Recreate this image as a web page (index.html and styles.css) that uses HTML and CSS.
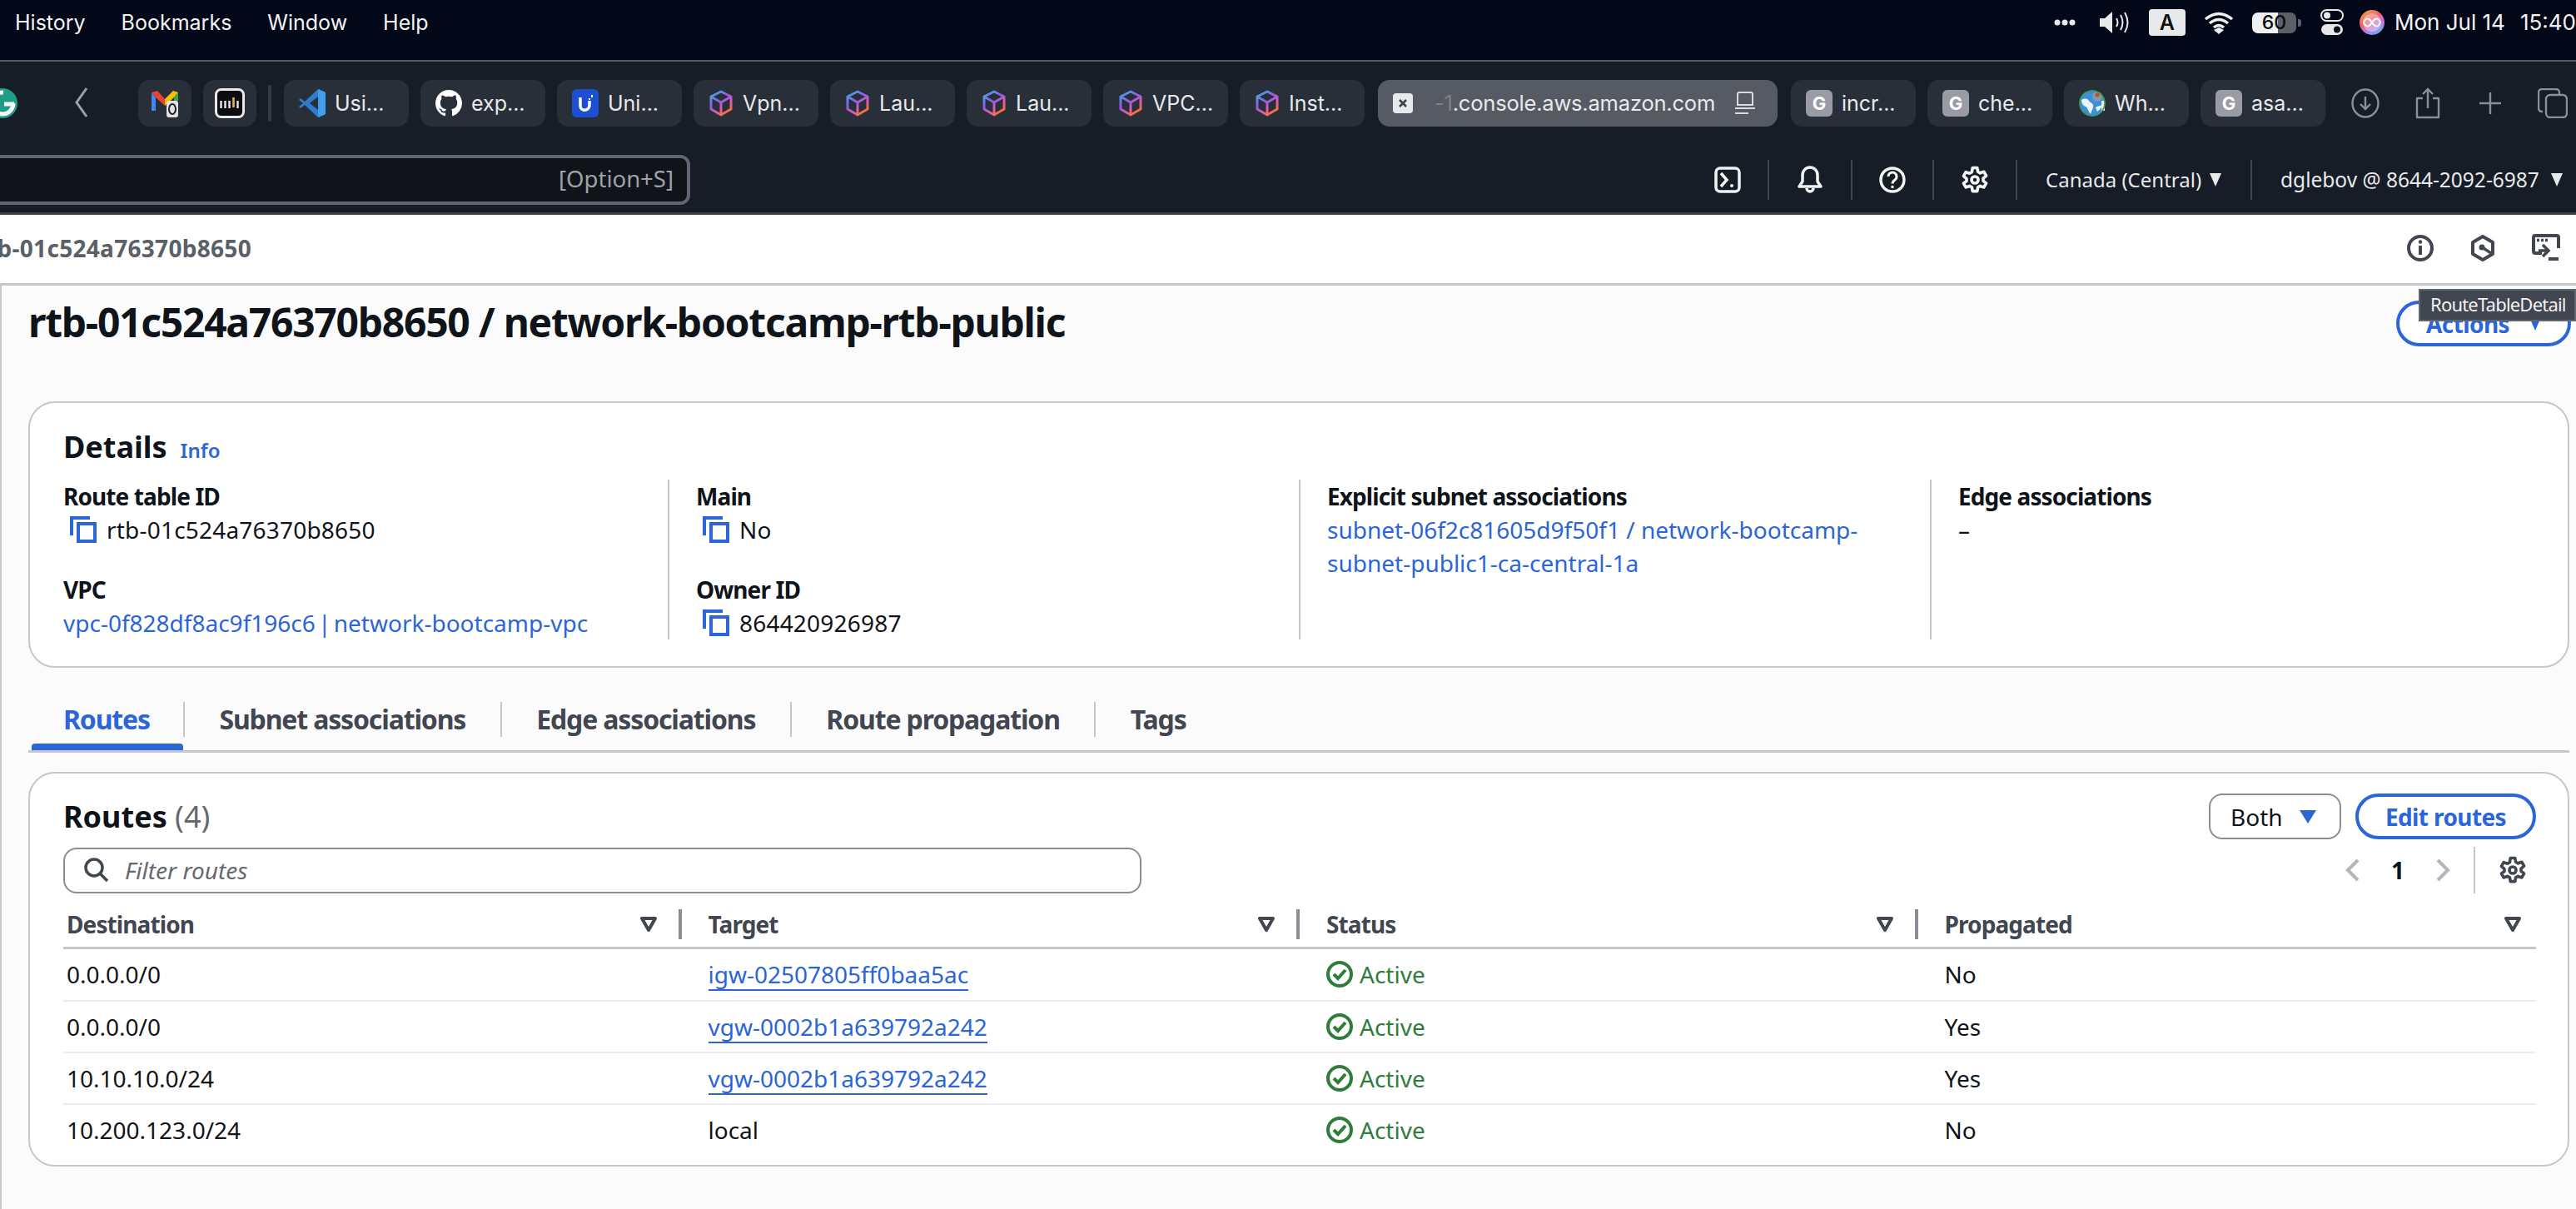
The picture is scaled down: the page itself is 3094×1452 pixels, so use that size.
FILE: index.html
```html
<!DOCTYPE html>
<html lang="en">
<head>
<meta charset="utf-8">
<title>Route table details</title>
<link rel="stylesheet" href="styles.css">
</head>
<body>
<svg class="defs" width="0" height="0" aria-hidden="true">
  <defs>
    <linearGradient id="cubeg" x1="0" y1="0" x2="0.6" y2="1">
      <stop offset="0" stop-color="#35b4d8"/><stop offset="0.45" stop-color="#8f5ce6"/><stop offset="0.75" stop-color="#d95bb8"/><stop offset="1" stop-color="#f4703c"/>
    </linearGradient>
    <symbol id="cube" viewBox="0 0 30 32"><path d="M15 2 27 8v15l-12 7L3 23V8z M3 8l12 7 12-7 M15 15v15" fill="none" stroke="url(#cubeg)" stroke-width="3" stroke-linejoin="round"/></symbol>
    <symbol id="gicon" viewBox="0 0 32 32"><rect width="32" height="32" rx="6" fill="#9b9ba6"/><text x="16" y="24" text-anchor="middle" font-family="Inter, sans-serif" font-weight="700" font-size="22" fill="#fff">G</text></symbol>
    <symbol id="copy" viewBox="0 0 32 32"><path d="M2 23V2h22" fill="none" stroke="#2b65d9" stroke-width="4"/><rect x="10" y="9" width="20" height="21" fill="none" stroke="#2b65d9" stroke-width="4"/></symbol>
    <symbol id="gear" viewBox="0 0 16 16"><path d="M6.7 1.2h2.6l.4 2.2 1.3.75 2.1-.75 1.3 2.25-1.7 1.45v1.4l1.7 1.45-1.3 2.25-2.1-.75-1.3.75-.4 2.2H6.7l-.4-2.2-1.3-.75-2.1.75-1.3-2.25L3.3 8.7V7.3L1.6 5.85 2.9 3.6l2.1.75 1.3-.75z" fill="none" stroke="currentColor" stroke-width="1.7" stroke-linejoin="round"/><circle cx="8" cy="8" r="1.9" fill="none" stroke="currentColor" stroke-width="1.7"/></symbol>
    <symbol id="sort" viewBox="0 0 20 18"><path d="M2 2h16l-8 14z" fill="none" stroke="#424650" stroke-width="4" stroke-linejoin="round"/></symbol>
    <symbol id="ok" viewBox="0 0 32 32"><circle cx="16" cy="16" r="14" fill="none" stroke="#2f7d3a" stroke-width="4"/><path d="M9 16l5 5 9-10" fill="none" stroke="#2f7d3a" stroke-width="4"/></symbol>
  </defs>
</svg>

<header class="menubar">
  <nav class="menu">
    <span>History</span><span>Bookmarks</span><span>Window</span><span>Help</span>
  </nav>
  <div class="status">
    <svg class="st-dots" width="26" height="8" viewBox="0 0 26 8"><circle cx="4" cy="4" r="3.500" fill="#e8e8ea"/><circle cx="13" cy="4" r="3.500" fill="#e8e8ea"/><circle cx="22" cy="4" r="3.500" fill="#e8e8ea"/></svg>
    <svg class="st-sound" width="40" height="28" viewBox="0 0 40 28"><path d="M1 9h6l9-8v26l-9-8H1z" fill="#e8e8ea"/><path d="M21 9q3 5 0 10M26 5q5 9 0 18M31 2q7 12 0 24" fill="none" stroke="#e8e8ea" stroke-width="2"/></svg>
    <span class="st-a">A</span>
    <svg class="st-wifi" width="36" height="28" viewBox="0 0 36 28"><path d="M2 10q16-13 32 0M7 15q11-9 22 0M12 20q6-5 12 0" fill="none" stroke="#f0f0f2" stroke-width="3.400"/><path d="M12 23l6-3 6 3-6 5z" fill="#f0f0f2"/></svg>
    <span class="st-batt">60</span>
    <svg class="st-ctl" width="28" height="32" viewBox="0 0 28 32"><rect x="1" y="1" width="26" height="13" rx="6.500" fill="none" stroke="#e8e8ea" stroke-width="2"/><circle cx="8" cy="7.500" r="4" fill="#e8e8ea"/><rect x="1" y="18" width="26" height="13" rx="6.500" fill="#e8e8ea"/><circle cx="20" cy="24.500" r="4" fill="#0a0f1c"/></svg>
    <svg class="st-siri" width="30" height="30" viewBox="0 0 30 30"><defs><linearGradient id="siri" x1="0.2" y1="0" x2="0.8" y2="1"><stop offset="0" stop-color="#f4a13b"/><stop offset="0.4" stop-color="#ee5f76"/><stop offset="0.7" stop-color="#b77bea"/><stop offset="1" stop-color="#43c4ea"/></linearGradient></defs><circle cx="15" cy="15" r="15" fill="url(#siri)"/><circle cx="15" cy="15" r="11" fill="#fff" fill-opacity="0.35"/><path d="M5 15c3-7 7-5 10 0s7 7 10 0c-3-7-7-5-10 0s-7 7-10 0z" fill="none" stroke="#fff" stroke-width="1.800"/></svg>
    <span class="st-date">Mon Jul 14</span>
    <span class="st-time">15:40</span>
  </div>
</header>

<section class="chrome">
  <div class="tabrow">
    <svg class="g-logo" width="21" height="36" viewBox="15 0 21 36"><circle cx="18" cy="18" r="18" fill="#1f9d86"/><circle cx="18" cy="18" r="13" fill="none" stroke="#f2f6f5" stroke-width="5" stroke-dasharray="62 20"/><path d="M20 19h12" stroke="#f2f6f5" stroke-width="5"/></svg>
    <svg class="back" width="18" height="38" viewBox="0 0 18 38"><path d="M15 2 3 19l12 17" fill="none" stroke="#9aa0a8" stroke-width="3"/></svg>
    <div class="pin first">
      <svg width="32" height="34" viewBox="0 0 32 34"><path d="M0 4v22h5V10z" fill="#4285f4"/><path d="M0 4 7 2l9 10 0 8-11-10z" fill="#ea4335"/><path d="M32 4v10l-5 2V10z" fill="#34a853"/><path d="M32 4l-6-2-10 10v8l11-10z" fill="#fbbc04"/><rect x="18" y="14" width="14" height="20" rx="3" fill="#dfe1e5"/><ellipse cx="25" cy="24" rx="4" ry="6" fill="none" stroke="#222" stroke-width="2"/></svg>
    </div>
    <div class="pin">
      <svg width="36" height="36" viewBox="0 0 36 36"><rect x="1.500" y="1.500" width="33" height="33" rx="6" fill="#0c0c0e" stroke="#e8e8ea" stroke-width="3"/><path d="M7.500 15v9M12.500 15v9M17.500 15v9M27.500 15v9" stroke="#e8e8ea" stroke-width="2.400"/><path d="M22.500 11v12" stroke="#e8b44a" stroke-width="2.600"/></svg>
    </div>
    <span class="tabsep"></span>
    <div class="tab"><svg width="32" height="34" viewBox="0 0 32 34"><path fill-rule="evenodd" d="M23 0 7 15 2 11 0 13l5 4-5 4 2 2 5-4 16 15 9-4V4zM23 9 13 17l10 8z" fill="#2f7cc8"/><path d="M23 0l9 4v26l-9 4z" fill="#3f9fee"/></svg><span>Usi...</span></div>
    <div class="tab"><svg width="32" height="34" viewBox="0 0 16 16" preserveAspectRatio="xMidYMid meet"><path fill="#fff" d="M8 0C3.580 0 0 3.580 0 8c0 3.540 2.290 6.530 5.470 7.590.4.070.55-.17.55-.38 0-.19-.01-.82-.01-1.490-2.010.37-2.530-.49-2.690-.94-.09-.23-.48-.94-.82-1.130-.28-.15-.68-.52-.01-.53.63-.01 1.080.58 1.230.82.720 1.210 1.870.870 2.330.660.070-.52.280-.870.510-1.070-1.780-.2-3.640-.89-3.640-3.950 0-.87.310-1.590.820-2.150-.08-.2-.36-1.020.080-2.120 0 0 .670-.210 2.200.820.640-.180 1.320-.270 2-.270s1.360.090 2 .270c1.530-1.040 2.200-.820 2.200-.820.440 1.100.160 1.920.080 2.120.510.560.820 1.270.820 2.150 0 3.070-1.870 3.750-3.650 3.950.290.250.540.730.540 1.480 0 1.070-.010 1.930-.010 2.200 0 .210.150.460.550.380A8.010 8.010 0 0 0 16 8c0-4.420-3.580-8-8-8z"/></svg><span>exp...</span></div>
    <div class="tab"><svg width="32" height="34" viewBox="0 0 32 34"><rect width="32" height="34" rx="6" fill="#1c4fd1"/><path d="M10 10v10c0 7 10 7 11 0v-6" fill="none" stroke="#fff" stroke-width="3.500"/><path d="M24 7v3M21 11v2" stroke="#fff" stroke-width="2"/></svg><span>Uni...</span></div>
    <div class="tab"><svg class="cube" width="30" height="32"><use href="#cube"/></svg><span>Vpn...</span></div>
    <div class="tab"><svg class="cube" width="30" height="32"><use href="#cube"/></svg><span>Lau...</span></div>
    <div class="tab"><svg class="cube" width="30" height="32"><use href="#cube"/></svg><span>Lau...</span></div>
    <div class="tab"><svg class="cube" width="30" height="32"><use href="#cube"/></svg><span>VPC...</span></div>
    <div class="tab"><svg class="cube" width="30" height="32"><use href="#cube"/></svg><span>Inst...</span></div>
    <div class="tab current">
      <svg width="24" height="24" viewBox="0 0 24 24"><rect width="24" height="24" rx="4" fill="#e8e9eb"/><path d="M8 8l8 8M16 8l-8 8" stroke="#3c4048" stroke-width="2.600"/></svg>
      <span class="url"><span class="fade">-1</span>.console.aws.amazon.com</span>
      <svg width="24" height="28" viewBox="0 0 24 28"><path d="M3 16V3a2 2 0 0 1 2-2h14a2 2 0 0 1 2 2v13z" fill="none" stroke="#d9dbde" stroke-width="2"/><path d="M0 20h24M0 26h16" stroke="#d9dbde" stroke-width="2"/></svg>
    </div>
    <div class="tab"><svg width="32" height="32"><use href="#gicon"/></svg><span>incr...</span></div>
    <div class="tab"><svg width="32" height="32"><use href="#gicon"/></svg><span>che...</span></div>
    <div class="tab"><svg width="32" height="34" viewBox="0 0 32 34"><circle cx="16" cy="17" r="15.500" fill="#3b8fdc"/><path d="M3 13c4-2 7-2 9 1s4 2 5 5-2 7-3 11c-3-3-3-7-6-9-3-1-5-4-5-8z" fill="#eef3f6"/><path d="M20 22c3-2 6-2 8-3-1 3-3 6-6 8z" fill="#eef3f6"/><circle cx="22" cy="9" r="6" fill="#8a97a5"/><circle cx="22" cy="7" r="2.500" fill="#c5463c"/><rect x="27" y="14" width="4" height="12" fill="#e8e9eb"/><circle cx="16" cy="17" r="15" fill="none" stroke="#3f9b4c" stroke-width="1.500"/></svg><span>Wh...</span></div>
    <div class="tab"><svg width="32" height="32"><use href="#gicon"/></svg><span>asa...</span></div>
    <div class="tools">
      <span><svg width="34" height="36" viewBox="0 0 34 36"><ellipse cx="17" cy="18" rx="15.500" ry="16.500" fill="none" stroke="#8b9098" stroke-width="2.400"/><path d="M17 10v15M11 19l6 6 6-6" fill="none" stroke="#8b9098" stroke-width="2.400"/></svg></span>
      <span><svg width="30" height="38" viewBox="0 0 30 38"><path d="M9 13H2v23h26V13h-7" fill="none" stroke="#8b9098" stroke-width="2.400" stroke-linejoin="round"/><path d="M15 25V2M9 8l6-6 6 6" fill="none" stroke="#8b9098" stroke-width="2.400"/></svg></span>
      <span><svg width="28" height="28" viewBox="0 0 28 28"><path d="M14 1v26M1 14h26" stroke="#8b9098" stroke-width="2.400"/></svg></span>
      <span><svg width="36" height="36" viewBox="0 0 36 36"><rect x="10" y="8" width="25" height="27" rx="5" fill="none" stroke="#8b9098" stroke-width="2.400"/><path d="M6 28H5a4 4 0 0 1-4-4V5a4 4 0 0 1 4-4h17a4 4 0 0 1 4 4v2" fill="none" stroke="#8b9098" stroke-width="2.400"/></svg></span>
    </div>
  </div>
  <div class="consolebar">
    <div class="searchbox"><span>[Option+S]</span></div>
    <div class="navitems">
      <span class="navicon first"><svg width="32" height="32" viewBox="0 0 32 32"><rect x="2" y="2" width="28" height="28" rx="5" fill="none" stroke="#f2f3f3" stroke-width="3.500"/><path d="M8 8l7 8-7 8" fill="none" stroke="#f2f3f3" stroke-width="3.500"/><circle cx="21" cy="23" r="2" fill="#f2f3f3"/></svg></span>
      <span class="navicon"><svg width="32" height="34" viewBox="0 0 32 34"><path d="M3 25h26l-4-6V11a9 9 0 0 0-18 0v8z" fill="none" stroke="#f2f3f3" stroke-width="3.500" stroke-linejoin="round"/><path d="M12 27a4 4 0 0 0 8 0" fill="none" stroke="#f2f3f3" stroke-width="3.500"/></svg></span>
      <span class="navicon first"><svg width="32" height="32" viewBox="0 0 32 32"><circle cx="16" cy="16" r="14" fill="none" stroke="#f2f3f3" stroke-width="3.500"/><path d="M11 12a5 5 0 1 1 8 4c-2 1.500-3 2.500-3 4.500" fill="none" stroke="#f2f3f3" stroke-width="3"/><circle cx="16" cy="24.500" r="1.800" fill="#f2f3f3"/></svg></span>
      <span class="navicon gearic"><svg width="34" height="34"><use href="#gear"/></svg></span>
      <span class="navlabel region">Canada (Central) <i class="caret"></i></span>
      <span class="navlabel account">dglebov @ 8644-2092-6987 <i class="caret"></i></span>
    </div>
  </div>
</section>

<section class="crumbbar">
  <div class="crumb"><span>rtb-01c524a76370b8650</span></div>
  <div class="crumbicons">
    <svg width="32" height="32" viewBox="0 0 32 32"><circle cx="16" cy="16" r="14" fill="none" stroke="#424650" stroke-width="4"/><path d="M16 13v11" stroke="#424650" stroke-width="4"/><circle cx="16" cy="8.500" r="2.200" fill="#424650"/></svg>
    <svg width="30" height="32" viewBox="0 0 30 32"><path d="M15 2 27 9v14l-12 7L3 23V9z" fill="none" stroke="#424650" stroke-width="4" stroke-linejoin="round"/><circle cx="14" cy="15" r="3.500" fill="#424650"/><path d="M14 15l11 7" stroke="#424650" stroke-width="3.500"/></svg>
    <svg width="34" height="34" viewBox="0 0 34 34"><path d="M12 23H4a2 2 0 0 1-2-2V4a2 2 0 0 1 2-2h26a2 2 0 0 1 2 2v13" fill="none" stroke="#424650" stroke-width="4"/><path d="M6 7.500h3M11 7.500h3M16 7.500h3" stroke="#424650" stroke-width="3.500"/><path d="M8 20h11M13 13l7 7-7 7" fill="none" stroke="#424650" stroke-width="3.500"/><rect x="20" y="28" width="12" height="4" fill="#424650"/></svg>
  </div>
</section>

<main class="page">
  <div class="titlerow">
    <h1>rtb-01c524a76370b8650 / network-bootcamp-rtb-public</h1>
    <button class="pillbtn actions">Actions <i class="caret blue"></i></button>
  </div>

  <section class="card details">
    <div class="dhead"><h2>Details</h2><a class="info">Info</a></div>
    <div class="detailgrid">
      <div class="dcol">
        <div class="kv"><b>Route table ID</b><p class="copyval"><svg width="32" height="32"><use href="#copy"/></svg>rtb-01c524a76370b8650</p></div>
        <div class="kv"><b>VPC</b><p><a class="vpc">vpc-0f828df8ac9f196c6 | network-bootcamp-vpc</a></p></div>
      </div>
      <div class="dcol">
        <div class="kv"><b>Main</b><p class="copyval"><svg width="32" height="32"><use href="#copy"/></svg>No</p></div>
        <div class="kv"><b>Owner ID</b><p class="copyval"><svg width="32" height="32"><use href="#copy"/></svg>864420926987</p></div>
      </div>
      <div class="dcol">
        <div class="kv"><b>Explicit subnet associations</b><p><a>subnet-06f2c81605d9f50f1 / network-bootcamp-subnet-public1-ca-central-1a</a></p></div>
      </div>
      <div class="dcol">
        <div class="kv"><b>Edge associations</b><p>–</p></div>
      </div>
    </div>
  </section>

  <nav class="tabs">
    <a class="on">Routes</a><a>Subnet associations</a><a>Edge associations</a><a>Route propagation</a><a>Tags</a>
  </nav>

  <section class="card routes">
    <div class="routeshead">
      <h2>Routes <span>(4)</span></h2>
      <div class="routebtns">
        <button class="selectbtn">Both <i class="caret blue big"></i></button>
        <button class="pillbtn edit">Edit routes</button>
      </div>
    </div>
    <div class="filterrow">
      <div class="filter">
        <svg width="32" height="32" viewBox="0 0 32 32"><circle cx="13" cy="13" r="10" fill="none" stroke="#424650" stroke-width="3.500"/><path d="M20 20l9 9" stroke="#424650" stroke-width="3.500"/></svg>
        <em>Filter routes</em>
      </div>
      <div class="pager">
        <svg width="24" height="28" viewBox="0 0 24 28"><path d="M18 2 6 14l12 12" fill="none" stroke="#b4b4bb" stroke-width="4"/></svg>
        <strong>1</strong>
        <svg width="24" height="28" viewBox="0 0 24 28"><path d="M6 2l12 12L6 26" fill="none" stroke="#b4b4bb" stroke-width="4"/></svg>
        <span class="pagersep"></span>
        <svg class="pgear" width="34" height="34"><use href="#gear"/></svg>
      </div>
    </div>
    <table>
      <thead>
        <tr>
          <th class="c0"><div class="thc"><span>Destination</span><svg width="20" height="18"><use href="#sort"/></svg><i></i></div></th>
          <th><div class="thc"><span>Target</span><svg width="20" height="18"><use href="#sort"/></svg><i></i></div></th>
          <th><div class="thc"><span>Status</span><svg width="20" height="18"><use href="#sort"/></svg><i></i></div></th>
          <th><div class="thc last"><span>Propagated</span><svg width="20" height="18"><use href="#sort"/></svg></div></th>
        </tr>
      </thead>
      <tbody>
        <tr><td class="c0">0.0.0.0/0</td><td><a class="ul">igw-02507805ff0baa5ac</a></td><td><span class="stat"><svg width="32" height="32"><use href="#ok"/></svg>Active</span></td><td>No</td></tr>
        <tr><td class="c0">0.0.0.0/0</td><td><a class="ul">vgw-0002b1a639792a242</a></td><td><span class="stat"><svg width="32" height="32"><use href="#ok"/></svg>Active</span></td><td>Yes</td></tr>
        <tr><td class="c0">10.10.10.0/24</td><td><a class="ul">vgw-0002b1a639792a242</a></td><td><span class="stat"><svg width="32" height="32"><use href="#ok"/></svg>Active</span></td><td>Yes</td></tr>
        <tr><td class="c0">10.200.123.0/24</td><td>local</td><td><span class="stat"><svg width="32" height="32"><use href="#ok"/></svg>Active</span></td><td>No</td></tr>
      </tbody>
    </table>
  </section>
  <div class="tooltip">RouteTableDetail</div>
</main>
</body>
</html>
```

FILE: styles.css
```css
* { box-sizing: border-box; }
html, body { margin: 0; padding: 0; height: 100%; }
body {
  width: 3094px; height: 1452px; overflow: hidden; background: #fbfbfb;
  font-family: "Noto Sans", sans-serif; font-size: 28px; line-height: 40px; color: #0f141a;
  display: flex; flex-direction: column;
}
.defs { position: absolute; }
a { color: #2b65d9; text-decoration: none; }
p, h1, h2 { margin: 0; }

/* macOS menu bar */
.menubar {
  height: 74px; flex: none; background: #030818; border-bottom: 2px solid #55585e;
  display: flex; justify-content: space-between; align-items: flex-start;
  font-family: Inter, sans-serif; font-size: 26px; color: #f2f2f4;
  padding-top: 8px; line-height: 38px;
}
.menu { display: flex; gap: 43px; padding-left: 18px; font-size: 25px; }
.status { display: flex; align-items: center; height: 38px; white-space: nowrap; }
.status svg { flex: none; }
.st-sound { margin-left: 28px; }
.st-a {
  width: 44px; height: 32px; margin-left: 20px; background: #e8e9eb; color: #111; border-radius: 4px;
  font-size: 25px; font-weight: 600; text-align: center; line-height: 32px;
}
.st-wifi { margin-left: 22px; }
.st-batt {
  position: relative; width: 53px; height: 25px; margin: 0 5px 0 22px; border-radius: 7px; color: #0a0a0a;
  background: linear-gradient(90deg, #eef0f2 59%, #5b5f68 59%);
  font-size: 23px; font-weight: 500; line-height: 25px; text-align: center;
}
.st-batt::after { content: ""; position: absolute; left: 55px; top: 8px; width: 4px; height: 9px; background: #5b5f68; border-radius: 0 3px 3px 0; }
.st-ctl { margin-left: 24px; }
.st-siri { margin-left: 19px; }
.st-date { margin-left: 12px; }
.st-time { margin-left: 18px; }

/* browser chrome */
.chrome { height: 184px; flex: none; background: #161d26; border-bottom: 3px solid #3b4048; display: flex; flex-direction: column; }
.tabrow { height: 96px; padding-top: 22px; display: flex; align-items: flex-start; font-family: Inter, sans-serif; font-size: 25px; color: #e8e9eb; white-space: nowrap; }
.g-logo { margin-top: 10px; flex: none; }
.back { margin: 8px 0 0 68px; flex: none; }
.pin { width: 64px; height: 56px; flex: none; background: #282f38; border-radius: 14px; display: flex; align-items: center; justify-content: center; }
.pin.first { margin-left: 59px; margin-right: 14px; }
.tabsep { width: 4px; height: 44px; flex: none; margin: 6px 15px 0 14px; background: #353b44; border-radius: 2px; }
.tab { width: 150px; height: 56px; margin-right: 14px; background: #282f38; border-radius: 14px; padding-left: 18px; display: flex; align-items: center; gap: 11px; flex: none; }
.tab.current { width: 480px; margin: 0 16px 0 2px; background: #565a63; gap: 26px; }
.url { width: 338px; margin-right: -3px; font-size: 25.500px; letter-spacing: -0.200px; }
.fade { color: #7e8188; }
.tools { display: flex; align-items: center; height: 56px; flex: none; margin-left: -4px; }
.tools span { width: 75px; display: flex; justify-content: center; flex: none; }

.consolebar { flex: 1; display: flex; justify-content: space-between; align-items: flex-start; padding-top: 16px; }
.searchbox {
  width: 829px; height: 60px; background: #101418; border: 4px solid #5f6670; border-left: 0;
  border-radius: 0 12px 12px 0; text-align: right; padding-right: 16px; color: #9ea3aa; font-size: 27.500px; line-height: 50px;
}
.navitems { display: flex; align-items: center; height: 60px; color: #e8e9eb; font-size: 24.500px; white-space: nowrap; }
.navicon { width: 100px; height: 48px; display: flex; align-items: center; justify-content: center; border-right: 2px solid #414750; }
.navicon.first { width: 98px; }
.gearic { color: #f2f3f3; }
.navlabel { height: 48px; display: flex; align-items: center; gap: 12px; }
.region { width: 282px; padding-left: 34px; border-right: 2px solid #414750; font-size: 24px; gap: 10px; }
.account { width: 389px; padding-left: 34px; gap: 14px; }
.caret { display: inline-block; width: 0; height: 0; border-left: 7px solid transparent; border-right: 7px solid transparent; border-top: 16px solid currentColor; }
.caret.blue { color: #2b65d9; }
.caret.big { border-left-width: 10px; border-right-width: 10px; border-top-width: 16px; margin-left: 20px; }

/* breadcrumb row */
.crumbbar { height: 85px; flex: none; background: #fff; border-bottom: 3px solid #c6c6cd; display: flex; justify-content: space-between; align-items: center; }
.crumb { width: 302px; display: flex; justify-content: flex-end; white-space: nowrap; font-weight: 700; font-size: 28px; letter-spacing: 0.300px; color: #5b5f68; margin-top: -2px; }
.crumbicons { display: flex; align-items: center; gap: 44px; padding-right: 19px; margin-top: -2px; }

/* page */
.page { flex: 1; position: relative; border-left: 2px solid #c6c6cd; padding: 18px 8px 0 32px; }
.titlerow { height: 55px; display: flex; justify-content: space-between; align-items: center; margin-bottom: 66px; }
h1 { font-size: 48px; line-height: 60px; font-weight: 700; letter-spacing: -1.270px; margin-top: -4px; }
.pillbtn {
  font: 700 28px/1 "Noto Sans", sans-serif; letter-spacing: -0.600px; color: #2b65d9; background: #fff; border: 4px solid #2b65d9; border-radius: 28px;
}
.actions { width: 210px; height: 55px; margin-right: -2px; display: flex; align-items: center; justify-content: center; gap: 24px; }
.card { background: #fff; border: 2px solid #c6c6cd; border-radius: 32px; }
.details { height: 320px; padding: 30px 0 0 40px; }
.dhead { height: 46px; display: flex; align-items: baseline; gap: 16px; }
.dhead h2 { font-size: 36px; line-height: 46px; font-weight: 700; }
.info { font-size: 24px; line-height: 46px; font-weight: 600; }
.detailgrid { display: grid; grid-template-columns: 726px 758px 758px 758px; margin-top: 16px; }
.dcol { height: 192px; padding-left: 32px; border-left: 2px solid #c6c6cd; display: flex; flex-direction: column; gap: 32px; padding-right: 32px; }
.dcol:first-child { border-left: 0; padding-left: 0; }
.kv b { display: block; font-weight: 700; letter-spacing: -0.900px; }
.copyval { display: flex; align-items: center; gap: 12px; letter-spacing: 0.200px; }
.copyval svg { margin-left: 8px; flex: none; }
.vpc { word-spacing: -4px; }

.tabs { height: 61px; margin-top: 41px; display: flex; align-items: flex-start; border-bottom: 3px solid #c6c6cd; font-size: 32px; font-weight: 700; letter-spacing: -1.150px; line-height: 42px; }
.tabs a { color: #424650; padding: 0 41.500px; border-left: 2px solid #c6c6cd; position: relative; white-space: nowrap; }
.tabs a.on { color: #2b65d9; border-left: 0; padding: 0 40px 0 42px; }
.tabs a.on::after { content: ""; position: absolute; left: 4px; right: 0; top: 50px; height: 8px; background: #2b65d9; border-radius: 4px 4px 0 0; }

.routes { height: 474px; margin-top: 23px; padding: 24px 38px 0 40px; }
.routeshead { height: 55px; display: flex; justify-content: space-between; align-items: center; }
.routeshead h2 { font-size: 36px; line-height: 46px; font-weight: 700; }
.routeshead h2 span { font-weight: 400; color: #656871; }
.routebtns { display: flex; gap: 17px; }
.selectbtn { width: 159px; height: 55px; background: #fff; border: 2px solid #8c8c94; border-radius: 16px; font: 400 28px/1 "Noto Sans", sans-serif; color: #0f141a; display: flex; align-items: center; padding-left: 24px; }
.edit { width: 217px; height: 55px; }
.filterrow { height: 56px; margin-top: 9px; display: flex; justify-content: space-between; align-items: center; }
.filter { width: 1295px; height: 55px; border: 2px solid #8c8c94; border-radius: 16px; display: flex; align-items: center; gap: 18px; padding-left: 22px; color: #656871; }
.pager { display: flex; align-items: center; height: 56px; padding-right: 11px; }
.pager strong { width: 88px; text-align: center; font-weight: 700; margin: 0 -2px; }
.pagersep { width: 2px; height: 56px; background: #c6c6cd; margin: 0 28px 0 25px; }
.pgear { color: #424650; }

table { width: 100%; table-layout: fixed; border-collapse: collapse; margin-top: 13px; }
th { height: 52px; padding: 0 0 3px 32px; border-bottom: 3px solid #c6c6cd; font-weight: 700; letter-spacing: -0.900px; text-align: left; color: #424650; }
.thc { display: flex; align-items: center; height: 40px; position: relative; }
.thc span { flex: 1; }
.thc svg { margin-right: 26px; }
.thc i { width: 4px; height: 36px; background: #8c8c94; }
.thc.last svg { margin-right: 18px; }
td { height: 62px; padding: 0 0 0 32px; border-bottom: 2px solid #ebebf0; }
tbody tr:first-child td { height: 64px; }
tr:last-child td { border-bottom: 0; padding-bottom: 2px; }
.c0 { padding-left: 4px; }
.ul { border-bottom: 2px solid #2b65d9; display: inline-block; line-height: 36px; }
.stat { display: flex; align-items: center; gap: 8px; color: #2f7d3a; }

.tooltip {
  position: absolute; left: 2903px; top: 4px; width: 189px; height: 39px; background: #424650; border: 2px solid #5f6670;
  color: #f2f3f3; font-size: 22px; letter-spacing: -0.800px; line-height: 32px; padding-left: 12px; white-space: nowrap; overflow: hidden;
}
```
